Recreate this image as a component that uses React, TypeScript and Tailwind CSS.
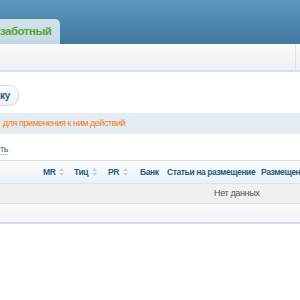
import React from "react";

const SortIcon = () => (
  <svg width="5" height="8" viewBox="0 0 5 8" className="ml-[4px] inline-block shrink-0">
    <path d="M2.5 0 L5 3 L0 3 Z" fill="#c5d0da" />
    <path d="M2.5 8 L5 5 L0 5 Z" fill="#c5d0da" />
  </svg>
);

export default function App() {
  return (
    <div
      className="w-[300px] h-[300px] overflow-hidden bg-white"
      style={{ fontFamily: '"Liberation Sans", Arial, sans-serif' }}
    >
      {/* Header */}
      <div className="h-[44px] bg-gradient-to-b from-[#5b98bf] to-[#42789e] flex items-end">
        <div className="h-[25px] w-[60px] rounded-tr-[5px] bg-gradient-to-b from-[#d2e3ec] to-[#c4d9e5] flex items-center overflow-hidden">
          <span className="text-[11.5px] font-bold text-[#5ea42f] whitespace-nowrap tracking-[-0.5px]">
            заботный
          </span>
        </div>
      </div>
      {/* Toolbar */}
      <div className="h-[28px] bg-gradient-to-b from-[#fafbfd] to-[#eef1f5] border-b-2 border-[#dcdfe3] flex justify-end">
        <div className="w-[5px] border-l border-[#dfe3e7]" />
      </div>
      {/* Button */}
      <div className="h-[41px] flex items-start pt-[13px]">
        <div className="h-[21px] w-[19px] rounded-r-[9px] border border-l-0 border-[#d8dde3] bg-gradient-to-b from-white to-[#edf0f3] flex items-center overflow-hidden">
          <span className="text-[10px] font-bold text-[#2d5a80] tracking-[-0.3px]">ку</span>
        </div>
      </div>
      {/* Info bar */}
      <div className="h-[21px] bg-[#e4ebf2] flex items-center pl-[3px]">
        <span className="text-[9px] text-[#f07b22] whitespace-nowrap tracking-[-0.45px]">
          для применения к ним действий
        </span>
      </div>
      {/* Link */}
      <div className="h-[26px] flex items-center pt-[4px]">
        <span className="text-[9px] text-[#2d5f88] border-b border-dotted border-[#9fb5c8] leading-[10px] tracking-[-0.3px]">ть</span>
      </div>
      {/* Table header */}
      <div className="h-[23px] border-t border-[#d6e0e9] bg-gradient-to-b from-[#fbfcfd] to-[#edf1f5] flex items-center text-[8.5px] font-bold text-[#2b5c84] whitespace-nowrap tracking-[-0.4px]">
        <div className="w-[43px] shrink-0" />
        <div className="w-[31px] shrink-0 flex items-center">MR<SortIcon /></div>
        <div className="w-[34px] shrink-0 flex items-center">Тиц<SortIcon /></div>
        <div className="w-[32px] shrink-0 flex items-center">PR<SortIcon /></div>
        <div className="w-[27px] shrink-0">Банк</div>
        <div className="w-[94px] shrink-0">Статьи на размещение</div>
        <div className="shrink-0">Размещение</div>
      </div>
      {/* Body */}
      <div className="h-[20px] border-t border-[#dde4ea] bg-[#f0f0f0] flex items-center pl-[214px]">
        <span className="text-[9px] text-[#555] whitespace-nowrap tracking-[-0.35px]">Нет данных</span>
      </div>
      {/* Footer */}
      <div className="h-[21px] border-t border-[#dfe5eb] border-b-2 border-b-[#d6dfe7] bg-gradient-to-b from-[#fafbfc] to-[#f2f4f6]" />
    </div>
  );
}
